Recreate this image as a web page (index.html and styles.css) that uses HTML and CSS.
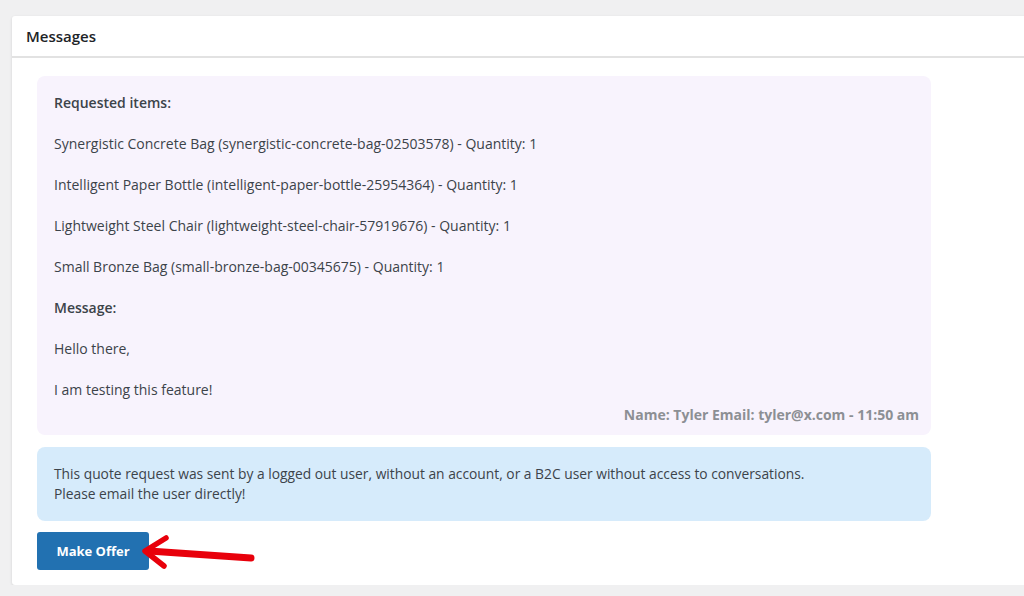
FILE: index.html
```html
<!DOCTYPE html>
<html lang="en">
<head>
    <meta charset="UTF-8">
    <meta name="viewport" content="width=device-width, initial-scale=1.0">
    <title>Messages</title>
    <link rel="stylesheet" href="styles.css">
</head>
<body>
    <!-- Messages panel -->
    <div class="panel">
        <div class="panel-header">
            <h2>Messages</h2>
        </div>

        <div class="panel-body">
            <!-- Quote request message -->
            <div class="message">
                <p><strong>Requested items:</strong></p>
                <p>Synergistic Concrete Bag (synergistic-concrete-bag-02503578) - Quantity: 1</p>
                <p>Intelligent Paper Bottle (intelligent-paper-bottle-25954364) - Quantity: 1</p>
                <p>Lightweight Steel Chair (lightweight-steel-chair-57919676) - Quantity: 1</p>
                <p>Small Bronze Bag (small-bronze-bag-00345675) - Quantity: 1</p>
                <p><strong>Message:</strong></p>
                <p>Hello there,</p>
                <p>I am testing this feature!</p>
                <div class="message-meta">Name: Tyler Email: tyler@x.com - 11:50 am</div>
            </div>

            <!-- Notice -->
            <div class="notice">
                This quote request was sent by a logged out user, without an account, or a B2C user without access to conversations.<br>
                Please email the user directly!
            </div>

            <div class="actions">
                <button class="offer-button">Make Offer</button>
                <svg class="arrow" width="118" height="36" viewBox="0 0 118 36">
                    <path d="M112 24 L10 17" stroke="#e8000b" stroke-width="7" stroke-linecap="round" fill="none"/>
                    <path d="M27 4 L6 17 L25 32" stroke="#e8000b" stroke-width="5.5" stroke-linecap="round" stroke-linejoin="round" fill="none"/>
                </svg>
            </div>
        </div>
    </div>
</body>
</html>
```

FILE: styles.css
```css
body {
    margin: 0;
    padding: 16px 0 0 12px;
    background-color: #f0f0f1;
    font-family: "Open Sans", "Noto Sans", sans-serif;
    color: #3c434a;
    overflow: hidden;
}

.panel {
    background-color: #fff;
    box-shadow: 0 1px 3px rgba(0, 0, 0, 0.12);
    border-radius: 3px 0 0 3px;
    width: 1030px;
    height: 569px;
}

.panel-header {
    height: 40px;
    border-bottom: 2px solid #e2e2e2;
    display: flex;
    align-items: center;
    padding-left: 14px;
}

.panel-header h2 {
    margin: 0;
    font-size: 15px;
    font-weight: 600;
    color: #1d2327;
}

.panel-body {
    padding: 18px 0 0 25px;
}

.message {
    width: 894px;
    box-sizing: border-box;
    background-color: #f8f3fd;
    border-radius: 8px;
    padding: 17px 12px 10px 17px;
    font-size: 14px;
}

.message p {
    margin: 0 0 21px;
    line-height: 20px;
}

.message p:nth-last-of-type(1) {
    margin-bottom: 0;
}

.message strong {
    font-weight: 600;
}

.message-meta {
    text-align: right;
    font-weight: 700;
    color: #8c8f94;
    margin-top: 5px;
    line-height: 20px;
}

.notice {
    width: 894px;
    box-sizing: border-box;
    margin-top: 12px;
    background-color: #d6ebfb;
    border-radius: 8px;
    padding: 17px 17px 17px;
    font-size: 13.8px;
    line-height: 20px;
}

.actions {
    display: flex;
    align-items: center;
    margin-top: 11px;
}

.offer-button {
    width: 112px;
    height: 38px;
    background-color: #2271b1;
    color: #fff;
    border: none;
    border-radius: 3px;
    font-family: inherit;
    font-size: 13px;
    font-weight: 700;
    cursor: pointer;
}

.offer-button:hover {
    background-color: #135e96;
}

.arrow {
    margin-left: -10px;
    margin-top: 2px;
}
```
